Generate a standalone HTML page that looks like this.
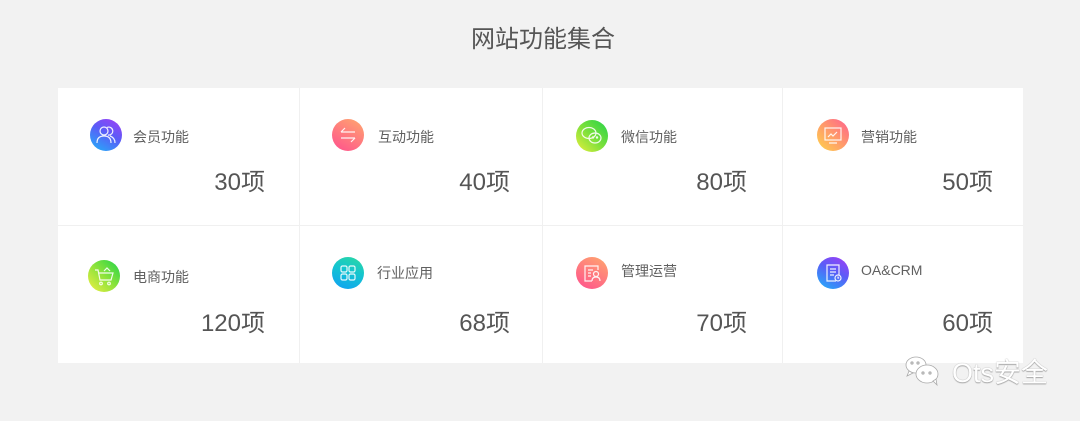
<!DOCTYPE html>
<html><head><meta charset="utf-8">
<style>
*{margin:0;padding:0;box-sizing:border-box}
body{width:1080px;height:421px;background:#f2f2f2;position:relative;overflow:hidden;font-family:"Liberation Sans","Noto Sans CJK SC",sans-serif;color:#555}
.title{position:absolute;left:0;width:1086px;top:24px;text-align:center;font-size:24px;line-height:32px;color:#555}
.card{position:absolute;left:58px;top:88px;width:965px;height:275px;background:#fff}
.vl{position:absolute;top:88px;width:1px;height:275px;background:#f0f0f0}
.hl{position:absolute;left:58px;top:225px;width:965px;height:1px;background:#f0f0f0}
.ic{position:absolute;width:32px;height:32px;border-radius:50%}
.ic svg{position:absolute;left:0;top:0}
.lb{position:absolute;font-size:14px;line-height:18px;color:#606060}
.n{position:absolute;font-size:24px;line-height:28px;color:#555;text-align:right;width:150px}
.wm{position:absolute;font-size:27px;color:#fff;text-shadow:0 0 1px #999,0 1px 1px #aaa;line-height:30px}
</style></head><body>
<div class="title">网站功能集合</div>
<div class="card"></div>
<div class="vl" style="left:299px"></div>
<div class="vl" style="left:542px"></div>
<div class="vl" style="left:782px"></div>
<div class="hl"></div>

<div class="ic" style="left:90px;top:119px;background:linear-gradient(210deg,#a43cf6,#5a5cf7 45%,#1fb4f8)">
<svg width="32" height="32" fill="none" stroke="#fff" stroke-width="1.2" opacity=".9"><circle cx="14" cy="12" r="4"/><path d="M7 24c0-5 3-7 7-7s7 2 7 7"/><path d="M17 8.5a4 4 0 1 1 1 7.5M20 17c3 1 5 3 5 7"/></svg></div>
<div class="lb" style="left:133px;top:128px">会员功能</div>
<div class="n" style="left:115px;top:169px">30项</div>

<div class="ic" style="left:332px;top:119px;background:linear-gradient(30deg,#ff4f8e,#ffa86e)">
<svg width="32" height="32" fill="none" stroke="#fff" stroke-width="1.2" opacity=".9"><path d="M9 13h14M9 13l4-4M23 19H9M23 19l-4 4"/></svg></div>
<div class="lb" style="left:378px;top:128px">互动功能</div>
<div class="n" style="left:360px;top:169px">40项</div>

<div class="ic" style="left:576px;top:120px;background:linear-gradient(225deg,#22d24a,#7be03b 50%,#e9ef3d)">
<svg width="32" height="32" fill="none" stroke="#fff" stroke-width="1.2" opacity=".9"><ellipse cx="13" cy="13" rx="7" ry="5.5"/><ellipse cx="19" cy="18" rx="6" ry="5"/><circle cx="17" cy="17.5" r=".6" fill="#fff"/><circle cx="21" cy="17.5" r=".6" fill="#fff"/></svg></div>
<div class="lb" style="left:621px;top:128px">微信功能</div>
<div class="n" style="left:597px;top:169px">80项</div>

<div class="ic" style="left:817px;top:119px;background:linear-gradient(225deg,#ff5f8f,#ff9b6a 50%,#ffd54a)">
<svg width="32" height="32" fill="none" stroke="#fff" stroke-width="1.2" opacity=".9"><rect x="8" y="9" width="16" height="12"/><path d="M12 24h8M11 18l3-3 2 2 4-4"/></svg></div>
<div class="lb" style="left:861px;top:128px">营销功能</div>
<div class="n" style="left:843px;top:169px">50项</div>

<div class="ic" style="left:88px;top:260px;background:linear-gradient(225deg,#1fd34a,#8fe33b 50%,#f2ef45)">
<svg width="32" height="32" fill="none" stroke="#fff" stroke-width="1.2" opacity=".9"><path d="M7 10h3l2 10h11l2-7H11"/><circle cx="13" cy="23.5" r="1.3"/><circle cx="21" cy="23.5" r="1.3"/><path d="M16 11l3-3 3 3"/></svg></div>
<div class="lb" style="left:133px;top:268px">电商功能</div>
<div class="n" style="left:115px;top:310px">120项</div>

<div class="ic" style="left:332px;top:257px;background:linear-gradient(200deg,#2cd9a0,#14c4d0 45%,#10a0f5)">
<svg width="32" height="32" fill="none" stroke="#fff" stroke-width="1.2" opacity=".9"><rect x="9" y="9" width="6" height="6" rx="1.5"/><rect x="17" y="9" width="6" height="6" rx="1.5"/><rect x="9" y="17" width="6" height="6" rx="1.5"/><rect x="17" y="17" width="6" height="6" rx="1.5"/></svg></div>
<div class="lb" style="left:377px;top:264px">行业应用</div>
<div class="n" style="left:360px;top:310px">68项</div>

<div class="ic" style="left:576px;top:257px;background:linear-gradient(30deg,#ff4f8e,#ffa86e)">
<svg width="32" height="32" fill="none" stroke="#fff" stroke-width="1.2" opacity=".9"><path d="M22 13V9H9v15h7"/><path d="M12 13h5M12 16h3M12 19h3"/><circle cx="20" cy="17" r="2.5"/><path d="M16 24c0-3 2-4 4-4s4 1 4 4"/></svg></div>
<div class="lb" style="left:621px;top:262px">管理运营</div>
<div class="n" style="left:597px;top:310px">70项</div>

<div class="ic" style="left:817px;top:257px;background:linear-gradient(210deg,#a43cf6,#5a5cf7 45%,#1fb4f8)">
<svg width="32" height="32" fill="none" stroke="#fff" stroke-width="1.2" opacity=".9"><path d="M19 24H10V8h12v10"/><path d="M13 12h6M13 15h6M13 18h4"/><circle cx="21" cy="21" r="3"/><path d="M21 19.5V21h1.2"/></svg></div>
<div class="lb" style="left:861px;top:261px">OA&amp;CRM</div>
<div class="n" style="left:843px;top:310px">60项</div>

<svg style="position:absolute;left:903px;top:354px" width="40" height="36" fill="#fff" stroke="#aaa" stroke-width="0.8"><ellipse cx="13" cy="11" rx="10" ry="8"/><path d="M6 17l-2 5 6-3z"/><ellipse cx="24" cy="20" rx="11" ry="9"/><path d="M30 27l4 4-1-6z"/><circle cx="20" cy="19" r="1.2" fill="#ccc"/><circle cx="27" cy="19" r="1.2" fill="#ccc"/><circle cx="9" cy="9" r="1.2" fill="#ccc"/><circle cx="15" cy="9" r="1.2" fill="#ccc"/></svg>
<div class="wm" style="left:952px;top:358px">Ots安全</div>
</body></html>
